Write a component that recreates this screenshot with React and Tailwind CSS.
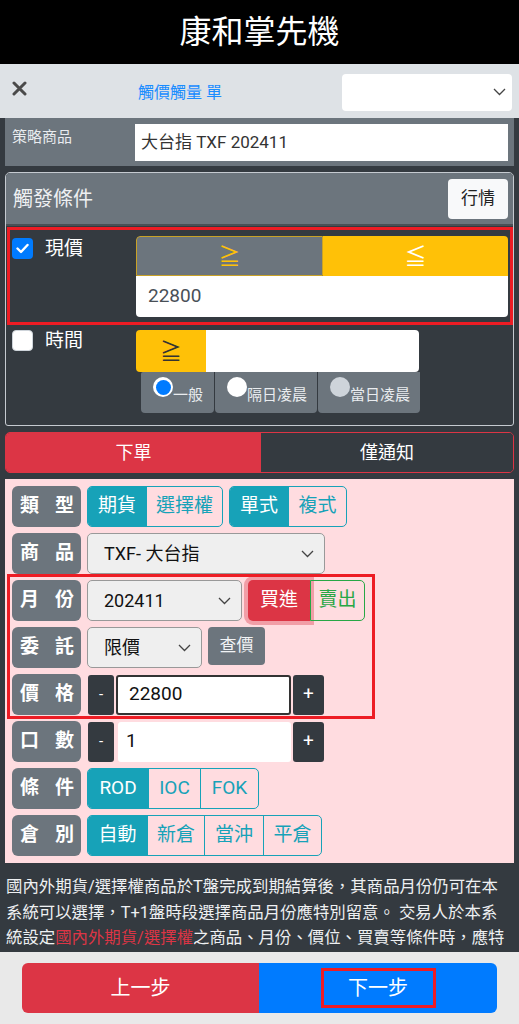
import React from 'react';

const FONT = { fontFamily: "Roboto, 'Noto Sans CJK TC', 'Noto Sans', sans-serif" };

const Chevron = ({ className = '' }) => (
  <svg className={className} width="13" height="8" viewBox="0 0 13 8" fill="none">
    <polyline points="1,1 6.5,6.5 12,1" stroke="#444" strokeWidth="1.3" />
  </svg>
);

const Check = () => (
  <svg width="13" height="11" viewBox="0 0 13 11" fill="none">
    <polyline points="1.5,5.5 5,9 11.5,2" stroke="#fff" strokeWidth="2.4" strokeLinecap="round" strokeLinejoin="round" />
  </svg>
);

const Close = () => (
  <svg width="15" height="15" viewBox="0 0 15 15" fill="none">
    <path d="M2 2 L13 13 M13 2 L2 13" stroke="#4a4a4a" strokeWidth="3" strokeLinecap="round" />
  </svg>
);

const Label = ({ a, b }) => (
  <div className="w-[69px] h-[41px] shrink-0 rounded-[6px] bg-[#6c757d] flex items-center justify-between pl-[8px] pr-[7px] text-white text-[19px] font-bold">
    <span>{a}</span>
    <span>{b}</span>
  </div>
);

const Seg = ({ items, active = 0, widths }) => (
  <div className="flex h-[41px] rounded-[5px] border border-[#17a2b8] overflow-hidden">
    {items.map((t, i) => (
      <div
        key={t}
        className={`flex items-center justify-center text-[19px] ${i > 0 ? 'border-l border-[#17a2b8]' : ''} ${i === active ? 'bg-[#17a2b8] text-white' : 'text-[#17a2b8]'}`}
        style={{ width: widths[i] }}
      >
        {t}
      </div>
    ))}
  </div>
);

const Select = ({ value, w, pad = 'pl-[16px]' }) => (
  <div className={`h-[41px] ${w} ${pad} pr-[10px] rounded-[5px] border border-[#999] bg-[#efefef] flex items-center justify-between text-[18px] text-[#111]`}>
    <span>{value}</span>
    <Chevron />
  </div>
);

const Stepper = ({ value, bordered }) => (
  <div className="flex items-center h-[41px]">
    <div className="w-[26px] h-[40px] ml-[1px] rounded-[3px] bg-[#343a40] text-white text-[15px] flex items-center justify-center">-</div>
    <div
      className={`h-[40px] bg-white flex items-center text-[19px] text-[#111] rounded-[3px] ${bordered ? 'w-[175px] ml-[2px] border-2 border-[#333] pl-[11px]' : 'w-[173px] ml-[4px] pl-[8px]'}`}
    >
      {value}
    </div>
    <div className="w-[31px] h-[40px] ml-[2px] rounded-[3px] bg-[#343a40] text-white text-[19px] flex items-center justify-center">+</div>
  </div>
);

const Radio = ({ label, state }) => (
  <div className="flex-1 flex items-start pt-[5px] pl-[12px] h-full">
    {state === 'on' && (
      <span className="w-[20px] h-[20px] rounded-full bg-white flex items-center justify-center shrink-0">
        <span className="w-[15px] h-[15px] rounded-full bg-[#007bff]" />
      </span>
    )}
    {state === 'off' && <span className="w-[20px] h-[20px] rounded-full bg-white shrink-0" />}
    {state === 'dis' && <span className="w-[20px] h-[20px] rounded-full bg-[#ced4da] shrink-0" />}
    <span className="text-[15px] text-[#e9ecef] mt-[7px]">{label}</span>
  </div>
);

export default function App() {
  return (
    <div className="w-[519px] h-[1024px] overflow-hidden bg-[#343a40] flex flex-col" style={FONT}>
      <div className="h-[64px] shrink-0 bg-black flex items-center justify-center text-white text-[32px]">康和掌先機</div>

      <div className="h-[54px] shrink-0 bg-[#dee2e6] flex items-center">
        <div className="w-[138px] pl-[12px] pb-[6px]">
          <Close />
        </div>
        <div className="flex-1 text-[#1a8cff] text-[16px] pt-[4px]">觸價觸量 單</div>
        <div className="w-[170px] h-[37px] mr-[7px] bg-white rounded-[4px] flex items-center justify-end pr-[6px] mt-[2px]">
          <Chevron />
        </div>
      </div>

      <div className="px-[5px] flex flex-col">
        <div className="h-[48px] bg-[#6c757d] flex">
          <div className="w-[130px] pl-[7px] pt-[8px] text-[15px] text-[#e9ecef]">策略商品</div>
          <div className="mt-[6px] h-[37px] w-[373px] bg-white flex items-center pl-[6px] text-[17px] text-[#333]">大台指 TXF 202411</div>
        </div>

        <div className="mt-[6px] border border-[#c5cad0] rounded-t-[5px] rounded-b-[3px] overflow-hidden">
          <div className="h-[53px] bg-[#6c757d] flex items-center justify-between pl-[7px] pr-[5px] border-b-2 border-[#4a5056]">
            <span className="text-[20px] text-[#eef0f2]">觸發條件</span>
            <span className="w-[60px] h-[40px] rounded-[4px] bg-[#f8f9fa] flex items-center justify-center text-[17px] text-[#222]">行情</span>
          </div>

          <div className="pl-[1px] pb-[12px]">
            <div className="mt-[1px] border-[3px] border-[#ed1c24] flex pt-[6px] pb-[5px]">
              <div className="w-[126px] flex items-start pl-[2px] pt-[2px]">
                <span className="w-[21px] h-[21px] rounded-[4px] bg-[#007bff] flex items-center justify-center">
                  <Check />
                </span>
                <span className="ml-[12px] text-[19px] text-white leading-none mt-[1px]">現價</span>
              </div>
              <div className="flex-1 mr-[2px] flex flex-col">
                <div className="flex h-[40px] rounded-t-[4px] overflow-hidden">
                  <div className="flex-1 bg-[#6c757d] border border-[#c9a227] rounded-tl-[4px] flex items-center justify-center text-[22px] text-[#ffc107]">≧</div>
                  <div className="flex-1 bg-[#ffc107] flex items-center justify-center text-[22px] text-white">≦</div>
                </div>
                <div className="h-[41px] bg-white rounded-b-[4px] flex items-center pl-[12px] text-[19px] text-[#495057]">22800</div>
              </div>
            </div>

            <div className="mt-[5px] flex">
              <div className="w-[129px] flex items-start pl-[5px]">
                <span className="w-[21px] h-[21px] rounded-[4px] bg-white border border-[#ced4da]" />
                <span className="ml-[12px] text-[19px] text-white leading-none mt-[1px]">時間</span>
              </div>
              <div className="flex flex-col">
                <div className="flex h-[42px]">
                  <div className="w-[70px] bg-[#ffc107] rounded-l-[4px] flex items-center justify-center text-[22px] text-[#333]">≧</div>
                  <div className="w-[213px] bg-white rounded-r-[4px]" />
                </div>
                <div className="ml-[5px] flex h-[41px] w-[279px] gap-[1px]">
                  <div className="w-[73px] bg-[#6c757d] rounded-b-[4px] rounded-tl-[2px]"><Radio label="一般" state="on" /></div>
                  <div className="w-[102px] bg-[#6c757d] rounded-b-[4px]"><Radio label="隔日凌晨" state="off" /></div>
                  <div className="w-[102px] bg-[#6c757d] rounded-b-[4px]"><Radio label="當日凌晨" state="dis" /></div>
                </div>
              </div>
            </div>
          </div>
        </div>

        <div className="mt-[6px] h-[41px] flex rounded-[5px] overflow-hidden border border-[#dc3545]">
          <div className="w-[255px] bg-[#dc3545] flex items-center justify-center text-white text-[18px]">下單</div>
          <div className="flex-1 bg-[#343a40] flex items-center justify-center text-white text-[18px]">僅通知</div>
        </div>

        <div className="mt-[6px] bg-[#ffdce0] pl-[7px] pt-[7px] pb-[7px] flex flex-col gap-[6px]">
          <div className="flex gap-[6px]">
            <Label a="類" b="型" />
            <Seg items={['期貨', '選擇權']} widths={[58, 76]} />
            <Seg items={['單式', '複式']} widths={[58, 58]} />
          </div>
          <div className="flex gap-[6px]">
            <Label a="商" b="品" />
            <Select value="TXF- 大台指" w="w-[238px]" />
          </div>

          <div className="relative flex flex-col gap-[6px]">
            <div className="absolute -top-[6px] -left-[5px] w-[368px] -bottom-[4px] border-[3px] border-[#ed1c24] pointer-events-none" />
            <div className="flex gap-[6px]">
              <Label a="月" b="份" />
              <Select value="202411" w="w-[155px]" />
              <div className="flex h-[41px]">
                <div className="w-[62px] bg-[#dc3545] rounded-l-[5px] flex items-center justify-center text-white text-[19px] shadow-[0_0_0_4px_rgba(225,83,97,0.45)]">買進</div>
                <div className="w-[55px] border border-[#28a745] rounded-r-[5px] flex items-center justify-center text-[#28a745] text-[19px]">賣出</div>
              </div>
            </div>
            <div className="flex gap-[6px]">
              <Label a="委" b="託" />
              <Select value="限價" w="w-[115px]" />
              <div className="w-[57px] h-[38px] bg-[#6c757d] rounded-[4px] flex items-center justify-center text-[17px] text-[#f1f3f5]">查價</div>
            </div>
            <div className="flex gap-[6px]">
              <Label a="價" b="格" />
              <Stepper value="22800" bordered />
            </div>
          </div>

          <div className="flex gap-[6px]">
            <Label a="口" b="數" />
            <Stepper value="1" />
          </div>
          <div className="flex gap-[6px]">
            <Label a="條" b="件" />
            <Seg items={['ROD', 'IOC', 'FOK']} widths={[60, 52, 58]} />
          </div>
          <div className="flex gap-[6px]">
            <Label a="倉" b="別" />
            <Seg items={['自動', '新倉', '當沖', '平倉']} widths={[59, 57, 59, 58]} />
          </div>
        </div>
      </div>

      <div className="flex-1 overflow-hidden px-[6px] pt-[11px] text-[16.4px] leading-[25.5px] text-[#eef0f2]">
        國內外期貨/選擇權商品於T盤完成到期結算後，其商品月份仍可在本系統可以選擇，T+1盤時段選擇商品月份應特別留意。 交易人於本系統設定
        <span className="text-[#dc3545]">國內外期貨/選擇權</span>
        之商品、月份、價位、買賣等條件時，應特
      </div>

      <div className="h-[72px] shrink-0 bg-[#e9e9e9] px-[22px] pt-[11px]">
        <div className="h-[50px] flex rounded-[6px] overflow-hidden">
          <div className="w-[237px] bg-[#dc3545] flex items-center justify-center text-white text-[20px]">上一步</div>
          <div className="flex-1 bg-[#007bff] flex items-center justify-center">
            <span className="border-[3px] border-[#ed1c24] w-[115px] h-[40px] flex items-center justify-center text-white text-[20px]">下一步</span>
          </div>
        </div>
      </div>
    </div>
  );
}
